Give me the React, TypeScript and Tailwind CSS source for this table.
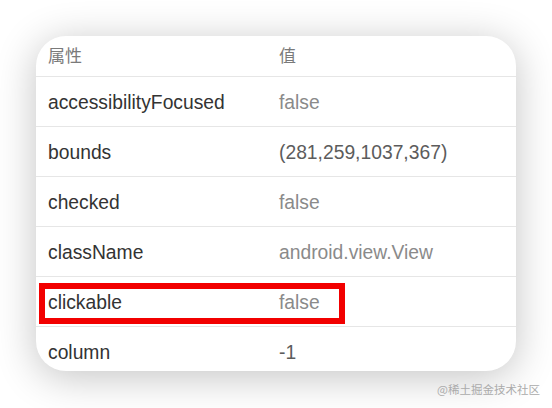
import React from "react";

const rows: { k: string; v: string; dark?: boolean; mark?: boolean }[] = [
  { k: "accessibilityFocused", v: "false" },
  { k: "bounds", v: "(281,259,1037,367)", dark: true },
  { k: "checked", v: "false" },
  { k: "className", v: "android.view.View" },
  { k: "clickable", v: "false", mark: true },
  { k: "column", v: "-1", dark: true },
];

export default function App() {
  return (
    <div
      className="relative w-[552px] h-[408px] bg-white overflow-hidden"
      style={{ fontFamily: '"Liberation Sans", Arial, "Noto Sans CJK SC", sans-serif' }}
    >
      <div className="pl-[36px] pt-[36px]">
        <div className="w-[480px] h-[335px] bg-white rounded-[30px] overflow-hidden shadow-[0_6px_40px_rgba(0,0,0,0.24)]">
          <div className="grid grid-cols-[231px_1fr] pl-[12px] h-[41px] items-center border-b border-[#e6e6e6] text-[17px] text-[#7a7a7a] pb-[2px]">
            <span style={{ fontFamily: '"Noto Sans CJK SC", sans-serif' }}>属性</span>
            <span style={{ fontFamily: '"Noto Sans CJK SC", sans-serif' }}>值</span>
          </div>
          {rows.map((r) => (
            <div
              key={r.k}
              className="relative grid grid-cols-[231px_1fr] pl-[12px] h-[50px] items-center border-b border-[#e6e6e6] text-[19.3px] pt-[3px]"
            >
              <span className="text-[#333333]">{r.k}</span>
              <span className={r.dark ? "text-[#5c5c5c]" : "text-[#8a8a8a]"}>{r.v}</span>
              {r.mark && (
                <div className="absolute left-[3px] top-[6px] w-[306px] h-[41px] border-[6px] border-[#f20000]" />
              )}
            </div>
          ))}
        </div>
      </div>
      <div
        className="absolute left-[437px] top-[384px] text-[11.5px] text-[#ababab] leading-none"
        style={{ fontFamily: '"Noto Sans CJK SC", sans-serif' }}
      >
        @稀土掘金技术社区
      </div>
    </div>
  );
}
